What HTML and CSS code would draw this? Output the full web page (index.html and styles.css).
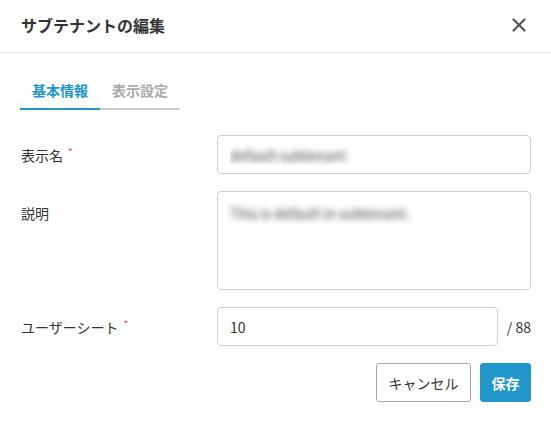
FILE: index.html
```html
<!DOCTYPE html>
<html lang="ja">
<head>
<meta charset="utf-8">
<link rel="stylesheet" href="styles.css">
</head>
<body>
<div class="modal">
  <div class="modal-header">
    <h1 class="modal-title">サブテナントの編集</h1>
    <button class="close-btn" aria-label="閉じる">
      <svg width="14" height="14" viewBox="0 0 14 14"><path d="M1.5 1.5 L12.5 12.5 M12.5 1.5 L1.5 12.5" stroke="#555" stroke-width="2.2" stroke-linecap="round" fill="none"/></svg>
    </button>
  </div>
  <div class="modal-body">
    <div class="tabs">
      <div class="tab active">基本情報</div>
      <div class="tab">表示設定</div>
    </div>
    <form class="form">
      <label class="label center">表示名<span class="req">*</span></label>
      <input class="field blurred" type="text" value="default subtenant">
      <label class="label top">説明</label>
      <textarea class="field area blurred">This is default in subtenant.</textarea>
      <label class="label center">ユーザーシート<span class="req">*</span></label>
      <div class="seat-row">
        <input class="field" type="text" value="10">
        <span class="seat-max">/ 88</span>
      </div>
    </form>
    <div class="actions">
      <button class="btn btn-cancel" type="button">キャンセル</button>
      <button class="btn btn-save" type="button">保存</button>
    </div>
  </div>
</div>
</body>
</html>
```
FILE: styles.css
```css
* { box-sizing: border-box; }
html, body {
  margin: 0;
  padding: 0;
  background: #fff;
}
body {
  font-family: "Noto Sans CJK JP", "Noto Sans", sans-serif;
  color: #333;
  font-size: 14px;
}
.modal {
  width: 551px;
  height: 422px;
  background: #fff;
}
.modal-header {
  height: 53px;
  border-bottom: 1px solid #e4e4e4;
  display: flex;
  align-items: center;
  justify-content: space-between;
  padding: 0 21px 0 21px;
}
.modal-title {
  margin: 0;
  font-size: 16px;
  font-weight: 700;
  color: #333;
  line-height: 20px;
  padding-bottom: 2px;
}
.close-btn {
  border: 0;
  background: none;
  padding: 0;
  width: 14px;
  height: 14px;
  display: flex;
  margin-right: 4px;
  margin-bottom: 2px;
}
.modal-body {
  padding: 20px 20px 0 21px;
}
.tabs {
  display: flex;
  margin-left: -1px;
}
.tab {
  width: 80px;
  text-align: center;
  font-size: 14px;
  font-weight: 700;
  line-height: 20px;
  padding: 7px 0 8px;
  color: #aaa;
  border-bottom: 2px solid #ccc;
}
.tab.active {
  color: #2196cb;
  border-bottom-color: #2196cb;
}
.form {
  margin-top: 25px;
  display: grid;
  grid-template-columns: 196px 1fr;
  row-gap: 17px;
}
.label {
  font-size: 14px;
  line-height: 20px;
  color: #333;
}
.label.center { align-self: center; }
.label.top { padding-top: 12px; }
.req {
  color: #e74c4c;
  font-size: 10px;
  vertical-align: top;
  margin-left: 5px;
  position: relative;
  top: -3px;
}
.field {
  font-family: inherit;
  font-size: 14px;
  color: #333;
  height: 39px;
  border: 1px solid #cfcfcf;
  border-radius: 4px;
  padding: 0 12px;
  width: 100%;
  outline: none;
  background: #fff;
}
.area {
  height: 99px;
  resize: none;
  padding: 9px 12px;
  line-height: 24px;
  display: block;
}
.blurred {
  color: transparent;
  text-shadow: 0 0 6px rgba(60, 60, 60, 1);
}
.seat-row {
  display: flex;
  align-items: center;
  gap: 9px;
}
.seat-row .field { flex: 1; }
.seat-max {
  font-size: 14px;
  color: #333;
  white-space: nowrap;
}
.actions {
  display: flex;
  justify-content: flex-end;
  gap: 9px;
  margin-top: 17px;
}
.btn {
  font-family: inherit;
  font-size: 14px;
  height: 39px;
  border-radius: 3px;
  padding: 0;
  white-space: nowrap;
  cursor: pointer;
}
.btn-cancel {
  background: #fff;
  border: 1px solid #a5a5a5;
  color: #333;
  width: 95px;
}
.btn-save {
  background: #2196cb;
  border: 1px solid #2196cb;
  color: #fff;
  font-weight: 700;
  width: 51px;
}
```
